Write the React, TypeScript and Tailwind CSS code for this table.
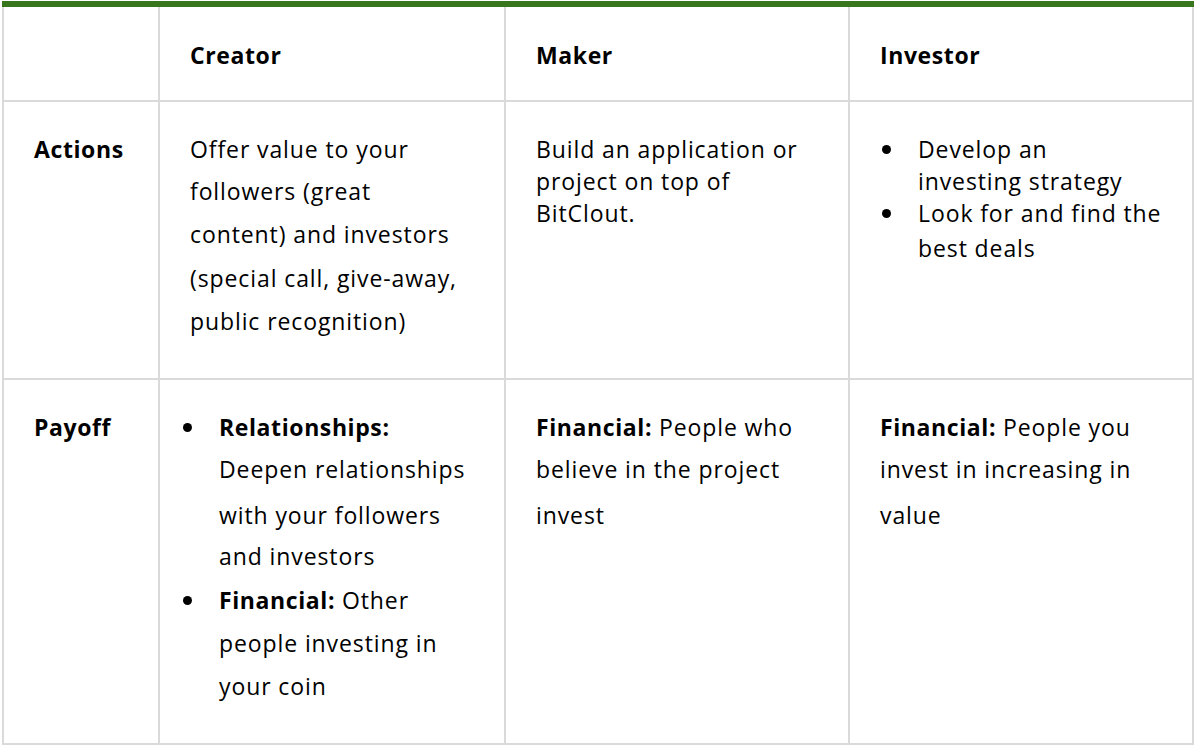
import type { ReactNode } from "react";

const Dot = () => <span className="block w-[9px] h-[9px] rounded-full bg-black" />;

const Line = ({ mt = "", children }: { mt?: string; children: ReactNode }) => (
	<div className={`leading-[32px] h-[32px] whitespace-nowrap ${mt}`}>{children}</div>
);

const B = ({ children }: { children: ReactNode }) => (
	<b className="font-bold tracking-[0.6px]">{children}</b>
);

const Bullet = ({ width, mt = "", children }: { width: string; mt?: string; children: ReactNode }) => (
	<div className={`flex ${mt}`}>
		<div className={`${width} h-[32px] flex items-center shrink-0`}>
			<Dot />
		</div>
		<div>{children}</div>
	</div>
);

const Cell = ({ className = "", children }: { className?: string; children?: ReactNode }) => (
	<div className={`bg-white pt-[31px] ${className}`}>{children}</div>
);

export default function App() {
	return (
		<div
			className="ml-[2px] mt-[1px] w-[1192px] text-[23px] text-black tracking-[0.9px]"
			style={{ fontFamily: '"Open Sans", "Noto Sans", sans-serif' }}
		>
			<div className="border-t-[6px] border-[#38761d]" />
			<div className="grid grid-cols-[154px_344px_342px_342px] grid-rows-[93px_276px_363px] gap-[2px] px-[2px] pb-[2px] bg-[#dadada]">
				{/* header */}
				<Cell className="pt-[32px]" />
				<Cell className="pt-[32px] pl-[30px]">
					<Line>
						<B>Creator</B>
					</Line>
				</Cell>
				<Cell className="pt-[32px] pl-[30px]">
					<Line>
						<B>Maker</B>
					</Line>
				</Cell>
				<Cell className="pt-[32px] pl-[30px]">
					<Line>
						<B>Investor</B>
					</Line>
				</Cell>

				{/* actions */}
				<Cell className="pl-[30px]">
					<Line>
						<B>Actions</B>
					</Line>
				</Cell>
				<Cell className="pl-[30px]">
					<Line>Offer value to your</Line>
					<Line mt="mt-[10px]">followers (great</Line>
					<Line mt="mt-[11px]">content) and investors</Line>
					<Line mt="mt-[12px]">(special call, give-away,</Line>
					<Line mt="mt-[11px]">public recognition)</Line>
				</Cell>
				<Cell className="pl-[30px]">
					<Line>Build an application or</Line>
					<Line>project on top of</Line>
					<Line>BitClout.</Line>
				</Cell>
				<Cell className="pl-[32px]">
					<Bullet width="w-[36px]">
						<Line>Develop an</Line>
						<Line>investing strategy</Line>
					</Bullet>
					<Bullet width="w-[36px]">
						<Line>Look for and find the</Line>
						<Line mt="mt-[3px]">best deals</Line>
					</Bullet>
				</Cell>

				{/* payoff */}
				<Cell className="pl-[30px]">
					<Line>
						<B>Payoff</B>
					</Line>
				</Cell>
				<Cell className="pl-[23px]">
					<Bullet width="w-[36px]">
						<Line>
							<B>Relationships:</B>
						</Line>
						<Line mt="mt-[10px]">Deepen relationships</Line>
						<Line mt="mt-[14px]">with your followers</Line>
						<Line mt="mt-[9px]">and investors</Line>
					</Bullet>
					<Bullet width="w-[36px]" mt="mt-[12px]">
						<Line>
							<B>Financial:</B> Other
						</Line>
					</Bullet>
					<div className="pl-[36px]">
						<Line mt="mt-[11px]">people investing in</Line>
						<Line mt="mt-[11px]">your coin</Line>
					</div>
				</Cell>
				<Cell className="pl-[30px]">
					<Line>
						<B>Financial:</B> People who
					</Line>
					<Line mt="mt-[10px]">believe in the project</Line>
					<Line mt="mt-[14px]">invest</Line>
				</Cell>
				<Cell className="pl-[30px]">
					<Line>
						<B>Financial:</B> People you
					</Line>
					<Line mt="mt-[10px]">invest in increasing in</Line>
					<Line mt="mt-[14px]">value</Line>
				</Cell>
			</div>
		</div>
	);
}
